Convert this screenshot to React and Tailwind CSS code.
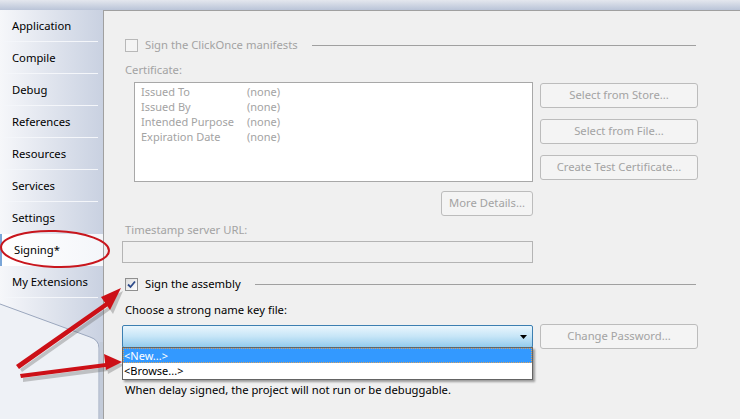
import React from "react";

const tabs = [
  "Application",
  "Compile",
  "Debug",
  "References",
  "Resources",
  "Services",
  "Settings",
  "Signing*",
  "My Extensions",
];

const font = { fontFamily: '"Noto Sans", "Open Sans", sans-serif' };

function Checkbox({ checked, disabled }) {
  return (
    <div
      className={`w-[13px] h-[13px] shrink-0 border flex items-center justify-center ${
        disabled ? "border-[#b8b8b8] bg-[#f4f4f4]" : "border-[#8f8f8f] bg-gradient-to-br from-[#dcdcdc] to-[#ffffff]"
      }`}
    >
      {checked && (
        <svg width="9" height="9" viewBox="0 0 9 9">
          <path d="M1 4.5 L3.5 7 L8 1.5" fill="none" stroke="#2c4a8a" strokeWidth="1.8" />
        </svg>
      )}
    </div>
  );
}

function Btn({ children, className = "" }) {
  return (
    <div
      className={`h-[25px] flex items-center justify-center rounded-[3px] border border-[#bcbcbc] bg-[#f4f4f4] text-[11.25px] text-[#a3a3a3] ${className}`}
    >
      {children}
    </div>
  );
}

export default function App() {
  return (
    <div className="relative w-[740px] h-[419px] overflow-hidden bg-[#f0f0f0]" style={font}>
      {/* top strip */}
      <div className="h-[10px] bg-gradient-to-b from-[#e4e7ee] to-[#bac4d8]" />
      <div className="flex h-[409px]">
        {/* sidebar */}
        <div className="w-[103px] shrink-0 flex flex-col bg-gradient-to-r from-[#f6f7fa] to-[#c9d1e1]">
          {tabs.map((t) => (
            <div
              key={t}
              className={`h-[32px] shrink-0 flex items-center pl-[12px] text-[11.25px] text-black relative ${
                t === "Signing*" ? "bg-gradient-to-r from-[#ffffff] to-[#f4f6fa] border-l-2 border-[#7aa6d8] pl-[10px] mr-[-1px]" : ""
              }`}
            >
              {t}
              {t !== "Signing*" && t !== "Settings" && (
                <div className="absolute left-[4px] right-[5px] bottom-[0px] h-px bg-[#f4f6fa]" />
              )}
            </div>
          ))}
          {/* bottom curve of the tab strip */}
          <div className="flex-1 relative bg-[#eef1f6]">
            <svg width="103" height="121" viewBox="0 0 103 121" className="absolute left-0 top-0">
              <defs>
                <linearGradient id="sb" x1="0" x2="1" y1="0" y2="0">
                  <stop offset="0" stopColor="#f6f7fa" />
                  <stop offset="1" stopColor="#c9d1e1" />
                </linearGradient>
              </defs>
              <path d="M0 0 H103 V121 H99 V50 Q99 42 90 39 L0 6 Z" fill="url(#sb)" />
              <path d="M0 6 L90 39 Q99 42 99 50 V121" fill="none" stroke="#9aa6bd" strokeWidth="1" />
              <rect x="99.5" y="44" width="3.5" height="77" fill="#c3cbd9" />
            </svg>
          </div>
        </div>

        {/* content panel */}
        <div className="flex-1 border-l border-t border-[#a0a0a0] bg-[#f0f0f0] pl-[18px] pr-[42px] relative">
          <div className="flex items-center h-[14px] mt-[27px] pl-[3px]">
            <Checkbox disabled />
            <span className="ml-[7px] text-[11.25px] text-[#a3a3a3] leading-none">Sign the ClickOnce manifests</span>
            <div className="flex-1 h-px bg-[#a0a0a0] ml-[14px] mr-[2px]" />
          </div>

          <div className="mt-[10px] pl-[3px] text-[11.25px] leading-[16px] text-[#a3a3a3]">Certificate:</div>

          <div className="flex mt-[4px]">
            <div className="ml-[12px] w-[399px] h-[100px] border border-[#a8a8a8] bg-white pt-[1px] pl-[6px] text-[11px] leading-[15px] text-[#a3a3a3]">
              {[
                ["Issued To", "(none)"],
                ["Issued By", "(none)"],
                ["Intended Purpose", "(none)"],
                ["Expiration Date", "(none)"],
              ].map(([k, v]) => (
                <div key={k} className="flex h-[15px]">
                  <span className="w-[106px]">{k}</span>
                  <span>{v}</span>
                </div>
              ))}
            </div>
            <div className="ml-[7px] w-[158px] pt-[1px] flex flex-col gap-[11px]">
              <Btn>Select from Store...</Btn>
              <Btn>Select from File...</Btn>
              <Btn>Create Test Certificate...</Btn>
            </div>
          </div>

          <div className="w-[411px] flex justify-end mt-[9px]">
            <Btn className="w-[92px]">More Details...</Btn>
          </div>

          <div className="mt-[6px] pl-[3px] text-[11.25px] leading-[16px] text-[#a3a3a3]">Timestamp server URL:</div>
          <div className="mt-[3px] w-[411px] h-[22px] border border-[#b4b4b4] bg-[#f0f0f0]" />

          <div className="flex items-center h-[14px] mt-[14px] pl-[3px]">
            <Checkbox checked />
            <span className="ml-[7px] text-[11.25px] text-black leading-none">Sign the assembly</span>
            <div className="flex-1 h-px bg-[#a0a0a0] ml-[14px] mr-[2px]" />
          </div>

          <div className="mt-[11px] pl-[3px] text-[11.25px] leading-[16px] text-black">Choose a strong name key file:</div>

          <div className="flex items-center mt-[6px] relative">
            <div className="w-[411px] h-[23px] border border-[#3c7fb1] rounded-[2px] bg-gradient-to-b from-[#eaf6fd] via-[#c6e5f7] to-[#93cbec] flex items-center justify-end pr-[5px]">
              <svg width="7" height="4" viewBox="0 0 7 4">
                <path d="M0 0 H7 L3.5 4 Z" fill="#000" />
              </svg>
            </div>
            <Btn className="ml-[7px] w-[158px]">Change Password...</Btn>

            {/* open dropdown list */}
            <div className="absolute left-0 top-[23px] w-[411px] h-[33px] border border-[#646464] bg-white shadow-[2px_2px_2px_rgba(0,0,0,0.35)] text-[11px] leading-[15px] z-10">
              <div className="h-[15px] bg-[#3399ff] text-white pl-[1px] outline outline-1 outline-dotted outline-[#d9a25f] -outline-offset-1">&lt;New...&gt;</div>
              <div className="h-[15px] text-black pl-[1px]">&lt;Browse...&gt;</div>
            </div>
          </div>

          <div className="mt-[33px] pl-[3px] text-[11.25px] leading-[16px] text-black">
            When delay signed, the project will not run or be debuggable.
          </div>
        </div>
      </div>

      {/* annotations */}
      <svg className="absolute left-0 top-0 pointer-events-none" width="740" height="419" viewBox="0 0 740 419">
        <ellipse cx="55" cy="249" rx="54" ry="18" transform="rotate(2 55 249)" fill="none" stroke="#c8161d" strokeWidth="2" />
        <g fill="#666" opacity="0.35" transform="translate(2 3)">
          <path d="M18 366 L106 304 L108 307 L20 369 Z" />
          <path d="M121 288 L102 298 L111 311 Z" />
          <path d="M21 375 L106 364 L106 368 L21 379 Z" />
          <path d="M122 362 L104 355 L106 371 Z" />
        </g>
        <g fill="#cc1017">
          <path d="M16 365 L106 302 L108 306 L19 369 Z" />
          <path d="M121 288 L101 297 L110 310 Z" />
          <path d="M20 374 L106 363 L106 367 L21 378 Z" />
          <path d="M122 362 L104 354 L106 370 Z" />
        </g>
      </svg>
    </div>
  );
}
